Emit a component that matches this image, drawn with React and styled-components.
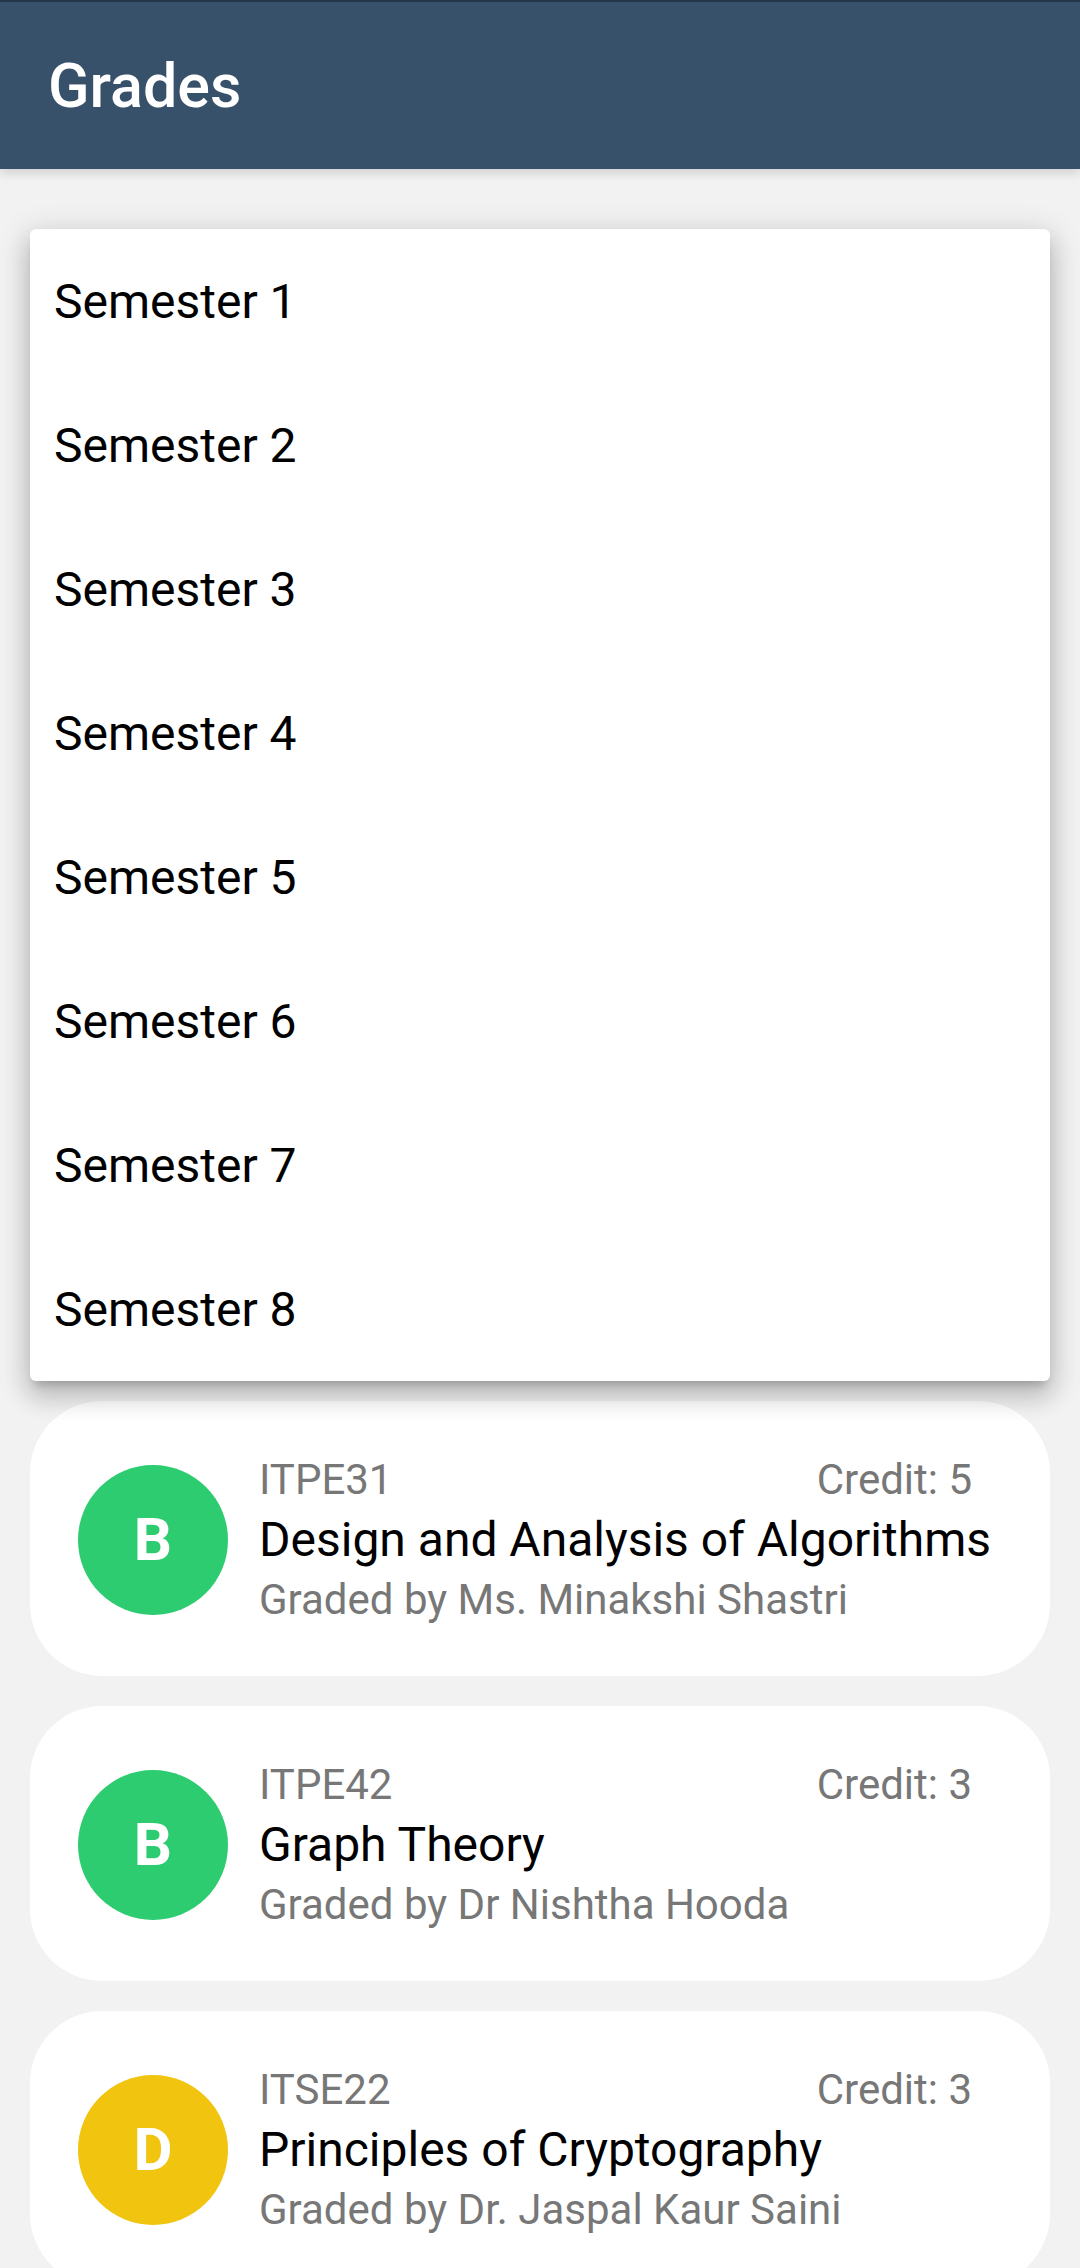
import React from 'react';
import styled, { createGlobalStyle } from 'styled-components';

const GlobalStyle = createGlobalStyle`
  body {
    margin: 0;
    background-color: #f2f2f2;
    font-family: Roboto, "Noto Sans", sans-serif;
  }
`;

const Page = styled.div`
  min-height: 100vh;
  background-color: #f2f2f2;
`;

const Header = styled.header`
  position: relative;
  z-index: 1;
  box-sizing: border-box;
  height: 169px;
  padding: 0 48px;
  display: flex;
  align-items: center;
  background-color: #38516b;
  border-top: 2px solid #243647;
  box-shadow: 0 4px 10px rgba(0, 0, 0, 0.14);
`;

const Title = styled.h1`
  margin: 0;
  color: #fff;
  font-size: 61px;
  font-weight: 500;
`;

const Content = styled.main`
  padding: 60px 30px 0;
`;

const Menu = styled.ul`
  position: relative;
  z-index: 2;
  margin: 0;
  padding: 0;
  list-style: none;
  background-color: #fff;
  border-radius: 6px;
  box-shadow: 0 16px 24px 2px rgba(0, 0, 0, 0.14),
    0 6px 30px 5px rgba(0, 0, 0, 0.12), 0 8px 10px -5px rgba(0, 0, 0, 0.2);
`;

const MenuItem = styled.li`
  height: 144px;
  padding: 0 24px;
  display: flex;
  align-items: center;
  font-size: 48px;
  color: #000;
`;

const CardList = styled.div`
  margin-top: 20px;
  display: flex;
  flex-direction: column;
  gap: 30px;
`;

const Card = styled.div`
  box-sizing: border-box;
  height: 275px;
  padding: 2px 78px 0 48px;
  display: flex;
  align-items: center;
  background-color: #fff;
  border-radius: 72px;
`;

const GradeCircle = styled.div`
  flex: 0 0 150px;
  height: 150px;
  border-radius: 50%;
  display: flex;
  align-items: center;
  justify-content: center;
  background-color: ${(p) => p.$color};
  color: #fff;
  font-size: 60px;
  font-weight: 700;
`;

const Info = styled.div`
  flex: 1;
  margin-left: 31px;
  min-width: 0;
`;

const TopRow = styled.div`
  display: flex;
  justify-content: space-between;
  font-size: 42px;
  line-height: 56px;
  color: #777;
`;

const CourseName = styled.div`
  font-size: 48px;
  line-height: 64px;
  color: #000;
  white-space: nowrap;
`;

const Teacher = styled.div`
  font-size: 42px;
  line-height: 56px;
  color: #777;
  white-space: nowrap;
`;

const gradeColors = {
  A: '#2ecc71',
  B: '#2ecc71',
  C: '#f1c40f',
  D: '#f1c40f',
};

const courses = [
  { grade: 'B', code: 'ITPE31', credit: 5, name: 'Design and Analysis of Algorithms', teacher: 'Ms. Minakshi Shastri' },
  { grade: 'B', code: 'ITPE42', credit: 3, name: 'Graph Theory', teacher: 'Dr Nishtha Hooda' },
  { grade: 'D', code: 'ITSE22', credit: 3, name: 'Principles of Cryptography', teacher: 'Dr. Jaspal Kaur Saini' },
];

const semesters = [1, 2, 3, 4, 5, 6, 7, 8];

const App = () => {
  return (
    <Page>
      <GlobalStyle />
      <Header>
        <Title>Grades</Title>
      </Header>
      <Content>
        <Menu>
          {semesters.map((n) => (
            <MenuItem key={n}>Semester {n}</MenuItem>
          ))}
        </Menu>
        <CardList>
          {courses.map((c) => (
            <Card key={c.code}>
              <GradeCircle $color={gradeColors[c.grade]}>{c.grade}</GradeCircle>
              <Info>
                <TopRow>
                  <span>{c.code}</span>
                  <span>Credit: {c.credit}</span>
                </TopRow>
                <CourseName>{c.name}</CourseName>
                <Teacher>Graded by {c.teacher}</Teacher>
              </Info>
            </Card>
          ))}
        </CardList>
      </Content>
    </Page>
  );
};

export default App;
